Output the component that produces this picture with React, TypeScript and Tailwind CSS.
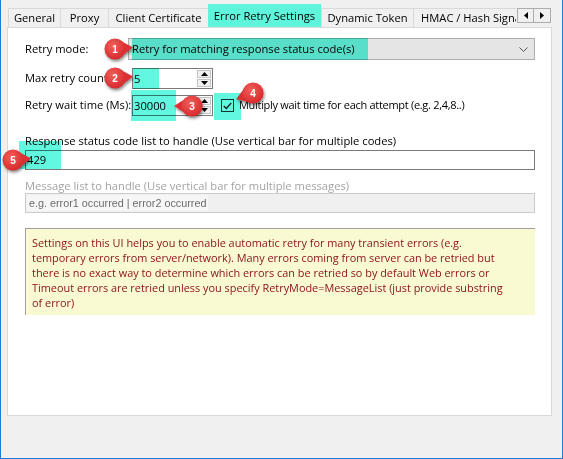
import React from 'react'

const font = { fontFamily: '"Open Sans", "Noto Sans", sans-serif' }

type BadgeProps = { n: number; x: number; y: number; angle: number }

// red numbered callout: circle with a tail, angle = tail direction in degrees (0 = right)
const Badge = ({ n, x, y, angle }: BadgeProps) => {
  const a = (angle * Math.PI) / 180
  const tip = [Math.cos(a) * 18, Math.sin(a) * 18]
  const p1 = [Math.cos(a - 0.75) * 10, Math.sin(a - 0.75) * 10]
  const p2 = [Math.cos(a + 0.75) * 10, Math.sin(a + 0.75) * 10]
  return (
    <div
      className="absolute h-[44px] w-[44px]"
      style={{ left: x - 22, top: y - 22 }}
    >
      <svg viewBox="-22 -22 44 44" className="absolute inset-0 h-full w-full drop-shadow-[1px_2px_1.5px_rgba(0,0,0,0.45)]">
        <defs>
          <radialGradient id={`g${n}`} cx="40%" cy="35%" r="70%">
            <stop offset="0%" stopColor="#f0605a" />
            <stop offset="100%" stopColor="#d7262b" />
          </radialGradient>
        </defs>
        <polygon points={`${p1[0]},${p1[1]} ${tip[0]},${tip[1]} ${p2[0]},${p2[1]}`} fill="#dc3034" />
        <circle cx="0" cy="0" r="10.5" fill={`url(#g${n})`} />
      </svg>
      <span className="absolute inset-0 flex items-center justify-center text-[10px] font-bold text-white" style={{ fontFamily: '"Liberation Sans", Arial, sans-serif' }}>
        {n}
      </span>
    </div>
  )
}

const Mark = ({ x, y, w, h }: { x: number; y: number; w: number; h: number }) => (
  <div
    className="pointer-events-none absolute bg-[#62f8e0] mix-blend-multiply"
    style={{ left: x, top: y, width: w, height: h }}
  />
)

const Spinner = () => (
  <div className="flex h-full w-[15px] flex-col gap-[1px] py-[1px] pr-[1px]">
    <div className="flex flex-1 items-center justify-center border border-[#c4c4c4] bg-[#f0f0f0]">
      <svg width="7" height="4" viewBox="0 0 7 4"><polygon points="0,4 3.5,0 7,4" fill="#000" /></svg>
    </div>
    <div className="flex flex-1 items-center justify-center border border-[#c4c4c4] bg-[#f0f0f0]">
      <svg width="7" height="4" viewBox="0 0 7 4"><polygon points="0,0 3.5,4 7,0" fill="#000" /></svg>
    </div>
  </div>
)

const Tab = ({ label, w, last }: { label: string; w: string; last?: boolean }) => (
  <div
    className={`flex h-[19px] items-center border-l border-t border-[#d9d9d9] bg-[#f0f0f0] ${w} ${last ? 'justify-start overflow-hidden whitespace-nowrap pl-[7px]' : 'justify-center'}`}
  >
    {label}
  </div>
)

export default function App() {
  return (
    <div
      className="relative h-[459px] w-[563px] overflow-hidden border-x border-b border-[#1f7ad3] bg-[#f0f0f0] text-[11.2px] text-black"
      style={font}
    >
      {/* tab strip */}
      <div className="flex h-[27px] items-end pl-[7px]">
        <Tab label="General" w="w-[52px]" />
        <Tab label="Proxy" w="w-[48px]" />
        <Tab label="Client Certificate" w="w-[100px]" />
        <div className="flex h-[23px] w-[113px] items-center justify-center bg-[#5ff5dd] pt-[1px]">
          Error Retry Settings
        </div>
        <Tab label="Dynamic Token" w="w-[92px]" />
        <Tab label="HMAC / Hash Signature" w="w-[103px]" last />
        <div className="mb-[4px] ml-[1px] flex h-[15px] self-end">
          <div className="flex w-[17px] items-center justify-center border border-[#adadad] bg-[#f0f0f0]">
            <svg width="4" height="7" viewBox="0 0 4 7"><polygon points="4,0 0,3.5 4,7" fill="#000" /></svg>
          </div>
          <div className="flex w-[17px] items-center justify-center border border-l-0 border-[#adadad] bg-[#f0f0f0]">
            <svg width="4" height="7" viewBox="0 0 4 7"><polygon points="0,0 4,3.5 0,7" fill="#000" /></svg>
          </div>
        </div>
      </div>

      {/* tab page */}
      <div className="ml-[6px] flex h-[389px] w-[545px] flex-col border border-[#d9d9d9] bg-white pl-[17px]">
        <div className="mt-[10px] flex h-[22px] items-center">
          <div className="w-[103px]">Retry mode:</div>
          <div className="flex h-full w-[407px] items-center justify-between border border-[#adadad] bg-[#e5e5e5] pl-[3px] pr-[6px]">
            <span>Retry for matching response status code(s)</span>
            <svg width="9" height="5" viewBox="0 0 9 5"><polyline points="0.5,0.5 4.5,4.5 8.5,0.5" fill="none" stroke="#555" strokeWidth="1" /></svg>
          </div>
        </div>

        <div className="mt-[8px] flex h-[21px] items-center">
          <div className="w-[107px] overflow-hidden whitespace-nowrap">Max retry count:</div>
          <div className="flex h-full w-[81px] border border-[#7a7a7a]">
            <span className="flex-1 pl-[1px] leading-[19px]">5</span>
            <Spinner />
          </div>
        </div>

        <div className="mt-[6px] flex h-[21px] items-center">
          <div className="w-[107px] whitespace-nowrap">Retry wait time (Ms):</div>
          <div className="flex h-full w-[81px] border border-[#7a7a7a]">
            <span className="flex-1 pl-[1px] leading-[19px]">30000</span>
            <Spinner />
          </div>
          <div className="ml-[8px] flex h-[13px] w-[13px] items-center justify-center border border-[#333]">
            <svg width="9" height="8" viewBox="0 0 9 8"><polyline points="0.8,4 3.3,6.5 8.2,1" fill="none" stroke="#222" strokeWidth="1.3" /></svg>
          </div>
          <span className="ml-[5px] text-[11px] tracking-[-0.3px]">Multiply wait time for each attempt (e.g. 2,4,8..)</span>
        </div>

        <div className="mt-[17px] leading-[15px]">
          Response status code list to handle (Use vertical bar for multiple codes)
        </div>
        <div className="mt-[2px] flex h-[20px] w-[510px] items-center border border-[#7a7a7a] pl-[1px]">429</div>

        <div className="mt-[8px] leading-[15px] text-[#a3a3a3]">
          Message list to handle (Use vertical bar for multiple messages)
        </div>
        <div className="flex h-[20px] w-[510px] items-center border border-[#cccccc] bg-[#f0f0f0] pl-[1px]">
          <span
            className="bg-[#f6f6f6] px-[2px] text-[10.8px] text-[#6d6d6d]"
            style={{ fontFamily: '"Liberation Sans", Arial, sans-serif' }}
          >
            e.g. error1 occurred | error2 occurred
          </span>
        </div>

        <div className="mt-[15px] h-[87px] w-[510px] whitespace-nowrap border-l border-t border-[#a0a0a0] bg-[#fafad2] pl-[6px] pt-[6px] text-[10.9px] leading-[15px] text-[#8c0f1c]">
          <div>Settings on this UI helps you to enable automatic retry for many transient errors (e.g.</div>
          <div>temporary errors from server/network). Many errors coming from server can be retried but</div>
          <div>there is no exact way to determine which errors can be retried so by default Web errors or</div>
          <div>Timeout errors are retried unless you specify RetryMode=MessageList (just provide substring</div>
          <div>of error)</div>
        </div>
      </div>

      {/* highlights */}
      <Mark x={131} y={38} w={236} h={22} />
      <Mark x={132} y={68} w={26} h={21} />
      <Mark x={130} y={90} w={45} h={31} />
      <Mark x={213} y={93} w={27} h={27} />
      <Mark x={18} y={141} w={42} h={28} />

      {/* callouts */}
      <Badge n={1} x={114} y={49} angle={-5} />
      <Badge n={2} x={114} y={78} angle={-5} />
      <Badge n={3} x={191} y={106} angle={180} />
      <Badge n={4} x={252} y={93} angle={160} />
      <Badge n={5} x={12} y={160} angle={-5} />
    </div>
  )
}
